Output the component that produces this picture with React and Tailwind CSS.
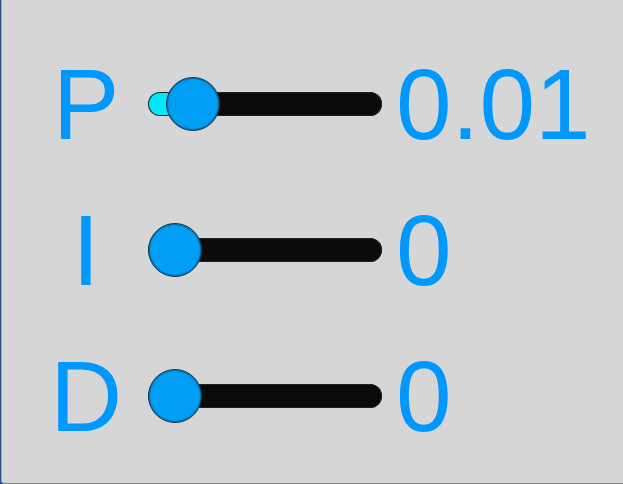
import { useState } from "react";

const GAINS = [
  { id: "gain-p", label: "P", initial: 0.01 },
  { id: "gain-i", label: "I", initial: 0 },
  { id: "gain-d", label: "D", initial: 0 },
];

const MAX = 0.1;

function GainRow({ id, label, initial }) {
  const [value, setValue] = useState(initial);
  // The colour change always sits underneath the thumb.
  const fill = 12 + (value / MAX) * 76;

  return (
    <div className="flex items-center">
      <label htmlFor={id} className="w-20 shrink-0 text-center">
        {label}
      </label>
      <input
        id={id}
        type="range"
        min={0}
        max={MAX}
        step={0.001}
        value={value}
        onChange={(e) => setValue(Number(e.target.value))}
        style={{ "--fill": `${fill}%` }}
        className="ml-[22px] h-14 min-w-20 max-w-[234px] flex-1 cursor-pointer appearance-none bg-transparent [&::-webkit-slider-runnable-track]:h-6 [&::-webkit-slider-runnable-track]:rounded-full [&::-webkit-slider-runnable-track]:bg-[linear-gradient(to_right,#00e8fa_var(--fill),#0b0b0b_var(--fill))] [&::-webkit-slider-runnable-track]:shadow-[inset_0_0_0_1px_#1c2426] [&::-webkit-slider-thumb]:-mt-[15px] [&::-webkit-slider-thumb]:size-[54px] [&::-webkit-slider-thumb]:appearance-none [&::-webkit-slider-thumb]:rounded-full [&::-webkit-slider-thumb]:border [&::-webkit-slider-thumb]:border-[#11364b] [&::-webkit-slider-thumb]:bg-[#009ff5] [&::-webkit-slider-thumb]:shadow-[inset_0_0_1px_1px_#0a6da6]"
      />
      <output htmlFor={id} className="ml-3.5 w-[200px] shrink-0">
        {value}
      </output>
    </div>
  );
}

export default function App() {
  return (
    <div className="flex min-h-screen bg-[#2b4c85] pl-px">
      <main className="flex-1 overflow-hidden rounded-bl border-b border-l border-b-[#808080] border-l-[#a3aab8] bg-[#d6d6d6] pt-[31px] pl-11 font-['Liberation_Sans',Arial,sans-serif] text-[100px] leading-[146px] text-[#0098ff]">
        {GAINS.map((gain) => (
          <GainRow key={gain.id} {...gain} />
        ))}
      </main>
    </div>
  );
}
